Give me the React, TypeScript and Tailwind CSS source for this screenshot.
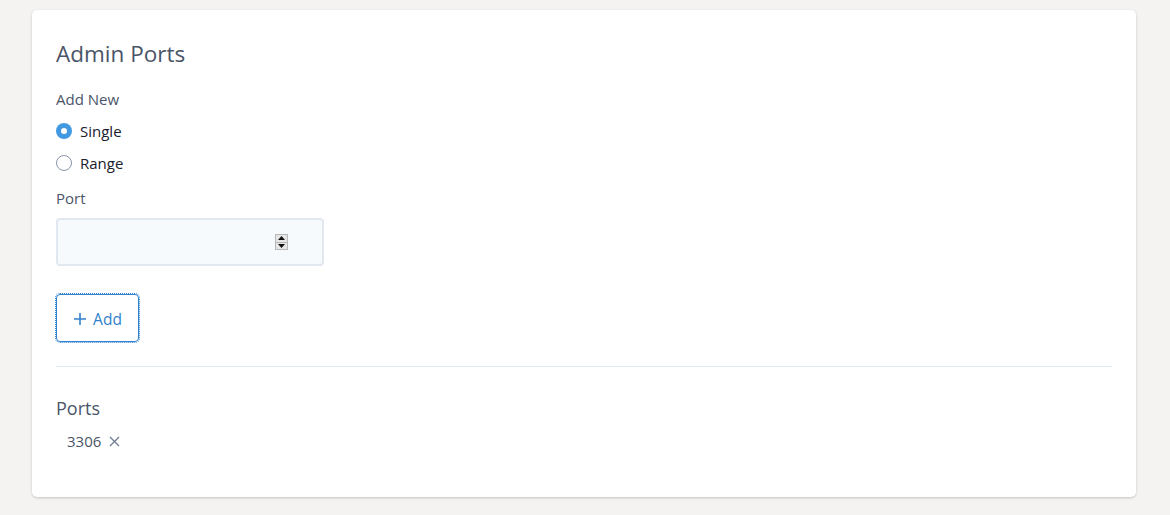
import React from "react";

export default function App() {
  return (
    <div className="min-h-[515px] bg-[#f4f3f1] pl-8 pt-[10px] pb-[18px]" style={{ fontFamily: '"Open Sans", "Noto Sans", sans-serif' }}>
      <div className="w-[1104px] bg-white rounded-[5px] shadow-[0_1px_3px_rgba(0,0,0,0.12),0_1px_2px_rgba(0,0,0,0.08)] px-6 pt-[28px] pb-[46px] text-[#4a5568]">
        <h1 className="text-[22.5px] leading-[32px] text-[#4a5568]">Admin Ports</h1>
        <div className="mt-[19px] text-[15px] leading-[20px]">Add New</div>
        <div className="mt-[12px] flex flex-col gap-[12px]">
          <label className="flex items-center gap-2 h-[20px] text-[15px] text-[#1a202c]">
            <span className="w-4 h-4 rounded-full bg-[#4299e1] flex items-center justify-center">
              <span className="w-[6px] h-[6px] rounded-full bg-white" />
            </span>
            Single
          </label>
          <label className="flex items-center gap-2 h-[20px] text-[15px] text-[#1a202c]">
            <span className="w-4 h-4 rounded-full border border-[#8a94a6] bg-white" />
            Range
          </label>
        </div>
        <div className="mt-[15px] text-[15px] leading-[20px]">Port</div>
        <div className="mt-[10px] w-[268px] h-[48px] rounded-[4px] border-2 border-[#e2e8f0] bg-[#f7fafc] flex items-center justify-end pr-[34px]">
          <div className="w-[13px] h-[16px] bg-[#e6e6e6] border border-[#b8b8b8] flex flex-col">
            <div className="flex-1 flex items-center justify-center border-b border-[#b8b8b8]">
              <svg width="7" height="4" viewBox="0 0 7 4"><path d="M3.5 0 L7 4 L0 4 Z" fill="#111" /></svg>
            </div>
            <div className="flex-1 flex items-center justify-center">
              <svg width="7" height="4" viewBox="0 0 7 4"><path d="M0 0 L7 0 L3.5 4 Z" fill="#111" /></svg>
            </div>
          </div>
        </div>
        <button className="mt-[28px] w-[83px] h-[48px] pt-[3px] rounded-[4px] border border-[#3182ce] outline outline-1 outline-dotted outline-[#3182ce] outline-offset-0 flex items-center justify-center gap-[6px] text-[15.5px] text-[#3182ce]">
          <svg width="14" height="14" viewBox="0 0 14 14" className="-mt-[2px]"><path d="M7 1 V13 M1 7 H13" stroke="#3182ce" strokeWidth="1.6" /></svg>
          Add
        </button>
        <div className="mt-[24px] h-px bg-[#e2e8f0]" />
        <h2 className="mt-[29px] text-[18px] leading-[24px]">Ports</h2>
        <div className="mt-[11px] ml-[11px] flex items-center gap-2 text-[15px] leading-[20px]">
          <span>3306</span>
          <svg width="11" height="11" viewBox="0 0 11 11"><path d="M1 1 L10 10 M10 1 L1 10" stroke="#718096" strokeWidth="1.4" /></svg>
        </div>
      </div>
    </div>
  );
}
